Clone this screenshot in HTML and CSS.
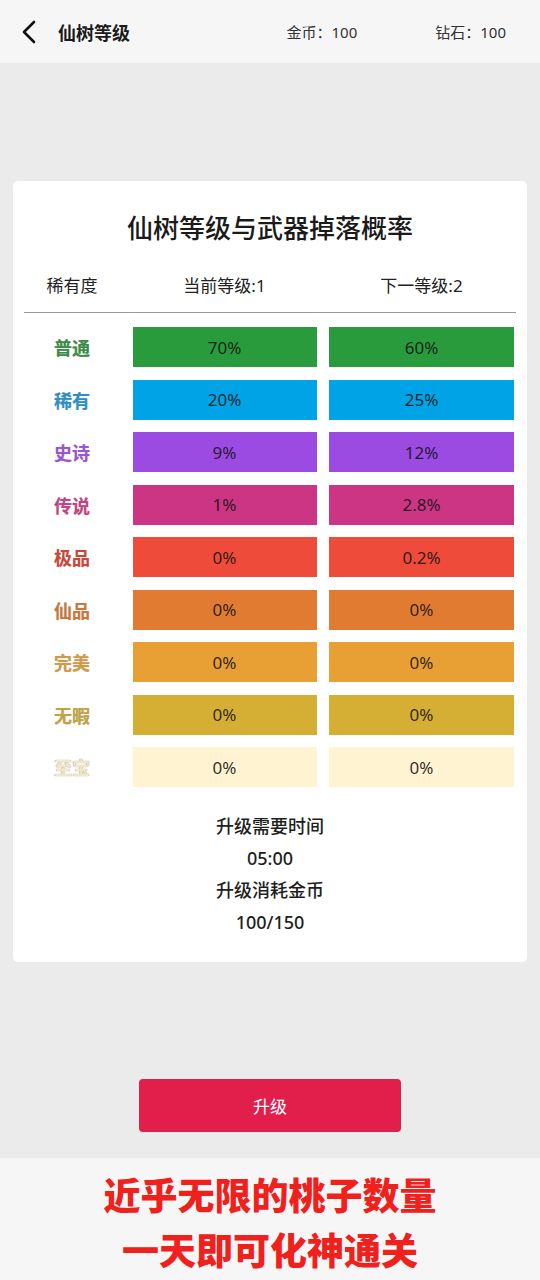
FILE: index.html
```html
<!DOCTYPE html>
<html lang="zh">
<head>
<meta charset="utf-8">
<title>仙树等级</title>
<link rel="stylesheet" href="styles.css">
</head>
<body>
<div class="page">
  <header class="topbar">
    <svg class="back" width="16" height="24" viewBox="0 0 16 24"><path d="M13 2 L3 12 L13 22" fill="none" stroke="#111" stroke-width="2.6" stroke-linecap="round" stroke-linejoin="round"/></svg>
    <div class="top-title">仙树等级</div>
    <div class="wallet">
      <span>金币：100</span>
      <span>钻石：100</span>
    </div>
  </header>

  <main class="content">
    <section class="card">
      <h1 class="card-title">仙树等级与武器掉落概率</h1>
      <div class="grid head">
        <div>稀有度</div>
        <div>当前等级:1</div>
        <div>下一等级:2</div>
      </div>
      <div class="rows">
        <div class="grid row"><div class="lbl c1">普通</div><div class="bar b1">70%</div><div class="bar b1">60%</div></div>
        <div class="grid row"><div class="lbl c2">稀有</div><div class="bar b2">20%</div><div class="bar b2">25%</div></div>
        <div class="grid row"><div class="lbl c3">史诗</div><div class="bar b3">9%</div><div class="bar b3">12%</div></div>
        <div class="grid row"><div class="lbl c4">传说</div><div class="bar b4">1%</div><div class="bar b4">2.8%</div></div>
        <div class="grid row"><div class="lbl c5">极品</div><div class="bar b5">0%</div><div class="bar b5">0.2%</div></div>
        <div class="grid row"><div class="lbl c6">仙品</div><div class="bar b6">0%</div><div class="bar b6">0%</div></div>
        <div class="grid row"><div class="lbl c7">完美</div><div class="bar b7">0%</div><div class="bar b7">0%</div></div>
        <div class="grid row"><div class="lbl c8">无暇</div><div class="bar b8">0%</div><div class="bar b8">0%</div></div>
        <div class="grid row"><div class="lbl c9">至宝</div><div class="bar b9">0%</div><div class="bar b9">0%</div></div>
      </div>
      <div class="info">
        <div>升级需要时间</div>
        <div>05:00</div>
        <div>升级消耗金币</div>
        <div>100/150</div>
      </div>
    </section>
    <button class="upgrade">升级</button>
  </main>

  <footer class="banner">
    <div>近乎无限的桃子数量</div>
    <div>一天即可化神通关</div>
  </footer>
</div>
</body>
</html>
```

FILE: styles.css
```css
html, body {
  margin: 0;
  padding: 0;
}
body {
  background: #ebebeb;
  font-family: "Noto Sans", "Noto Sans CJK SC", sans-serif;
  color: #1e1e1e;
}
.page {
  width: 540px;
  height: 1280px;
  display: flex;
  flex-direction: column;
  overflow: hidden;
}
.topbar {
  height: 63px;
  flex: none;
  background: #f6f6f6;
  display: flex;
  align-items: center;
  padding: 0 34px 0 21px;
  box-sizing: border-box;
}
.back {
  display: block;
  margin-top: 1px;
}
.top-title {
  margin-left: 21px;
  font-family: "Noto Sans CJK SC", sans-serif;
  font-size: 18px;
  font-weight: 700;
  color: #1a1a1a;
}
.wallet {
  margin-left: auto;
  display: flex;
  gap: 78px;
  font-size: 15px;
  color: #333;
}
.content {
  flex: 1;
  display: flex;
  flex-direction: column;
  align-items: center;
}
.card {
  margin-top: 118px;
  width: 514px;
  box-sizing: border-box;
  background: #fff;
  border-radius: 5px;
  padding: 29px 11px 24px 11px;
}
.card-title {
  margin: 0;
  text-align: center;
  font-family: "Noto Sans CJK SC", sans-serif;
  font-size: 26px;
  line-height: 34px;
  font-weight: 500;
  color: #1a1a1a;
}
.grid {
  display: grid;
  grid-template-columns: 96px 184px 185px;
  column-gap: 12.5px;
}
.head {
  margin-top: 29px;
  font-size: 17px;
  line-height: 26px;
  text-align: center;
  color: #222;
  padding-bottom: 13px;
  border-bottom: 1.5px solid #999;
}
.rows {
  margin-top: 14px;
  display: flex;
  flex-direction: column;
  gap: 12.5px;
}
.row {
  height: 40px;
  align-items: center;
}
.lbl {
  text-align: center;
  font-family: "Noto Sans CJK SC", sans-serif;
  font-size: 18px;
  font-weight: 700;
  text-shadow: 0 0 1px rgba(0, 0, 0, 0.25);
}
.bar {
  height: 40px;
  display: flex;
  align-items: center;
  justify-content: center;
  font-size: 17px;
  color: rgba(20, 20, 20, 0.9);
}
.c1 { color: #3b8c48; }
.c2 { color: #2d8fc8; }
.c3 { color: #9a55d2; }
.c4 { color: #c24482; }
.c5 { color: #c8493c; }
.c6 { color: #c9793f; }
.c7 { color: #d39a46; }
.c8 { color: #c2a341; }
.c9 { color: #f1e6c6; text-shadow: 0 0 1px rgba(0,0,0,0.55); }
.b1 { background: #2a9b3d; }
.b2 { background: #00a3e6; }
.b3 { background: #9b4be2; }
.b4 { background: #cc3484; }
.b5 { background: #ef4b3b; }
.b6 { background: #e27b32; }
.b7 { background: #e8a035; }
.b8 { background: #d5ae34; }
.b9 { background: #fff3d1; }
.info {
  margin-top: 23px;
  text-align: center;
  font-size: 18px;
  line-height: 32px;
  font-weight: 500;
  color: #1e1e1e;
}
.upgrade {
  margin-top: 117px;
  width: 262px;
  height: 53px;
  border: none;
  border-radius: 4px;
  background: #e21e4b;
  color: #fff;
  font-family: "Noto Sans CJK SC", sans-serif;
  font-size: 17px;
}
.banner {
  flex: none;
  height: 122px;
  box-sizing: border-box;
  background: #f6f6f6;
  padding-top: 9px;
  text-align: center;
  font-family: "Noto Sans CJK SC", sans-serif;
  font-weight: 900;
  font-size: 37px;
  line-height: 55px;
  color: #f0201c;
}
```
